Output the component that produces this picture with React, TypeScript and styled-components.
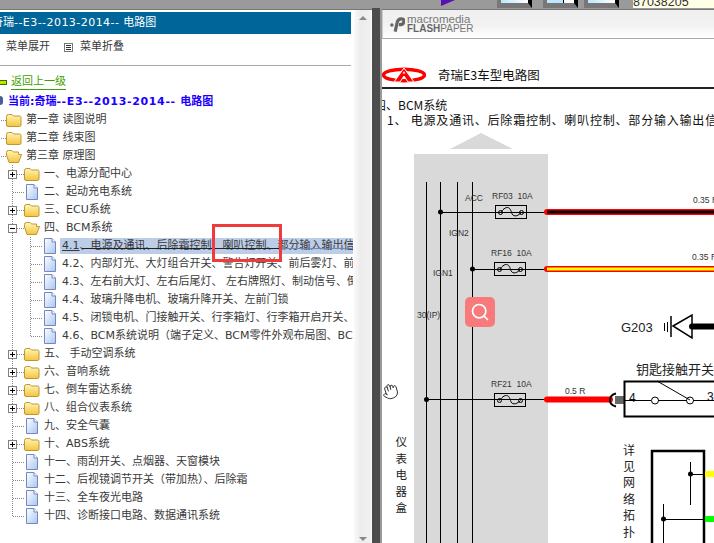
import React from "react";
import styled, { createGlobalStyle } from "styled-components";
import { Hand, Search } from "lucide-react";

const GlobalStyle = createGlobalStyle`
  html, body {
    margin: 0;
    background: #fff;
  }
`;

type Kind = "closed" | "open" | "doc";

interface TreeItem {
  text: string;
  level: number;
  kind: Kind;
  expander?: "plus" | "minus";
  last?: boolean;
  selected?: boolean;
}

const treeItems: TreeItem[] = [
  { text: "第一章 读图说明", level: 1, kind: "closed" },
  { text: "第二章 线束图", level: 1, kind: "closed" },
  { text: "第三章 原理图", level: 1, kind: "open" },
  { text: "一、电源分配中心", level: 2, kind: "closed", expander: "plus" },
  { text: "二、起动充电系统", level: 2, kind: "doc" },
  { text: "三、ECU系统", level: 2, kind: "closed", expander: "plus" },
  { text: "四、BCM系统", level: 2, kind: "open", expander: "minus" },
  { text: "4.1、电源及通讯、后除霜控制、喇叭控制、部分输入输出信号", level: 3, kind: "doc", selected: true },
  { text: "4.2、内部灯光、大灯组合开关、警告灯开关、前后雾灯、前舱盖", level: 3, kind: "doc" },
  { text: "4.3、左右前大灯、左右后尾灯、 左右牌照灯、制动信号、倒车灯", level: 3, kind: "doc" },
  { text: "4.4、玻璃升降电机、玻璃升降开关、左前门锁", level: 3, kind: "doc" },
  { text: "4.5、闭锁电机、门接触开关、行李箱灯、行李箱开启开关、顶灯", level: 3, kind: "doc" },
  { text: "4.6、BCM系统说明（端子定义、BCM零件外观布局图、BCM", level: 3, kind: "doc", last: true },
  { text: "五、 手动空调系统", level: 2, kind: "closed", expander: "plus" },
  { text: "六、音响系统", level: 2, kind: "closed", expander: "plus" },
  { text: "七、倒车雷达系统", level: 2, kind: "closed", expander: "plus" },
  { text: "八、组合仪表系统", level: 2, kind: "closed", expander: "plus" },
  { text: "九、安全气囊", level: 2, kind: "doc" },
  { text: "十、ABS系统", level: 2, kind: "closed", expander: "plus" },
  { text: "十一、雨刮开关、点烟器、天窗模块", level: 2, kind: "doc" },
  { text: "十二、后视镜调节开关（带加热）、后除霜", level: 2, kind: "doc" },
  { text: "十三、全车夜光电路", level: 2, kind: "doc" },
  { text: "十四、诊断接口电路、数据通讯系统", level: 2, kind: "doc", last: true },
];

const TreeIcon = ({ kind }: { kind: Kind }) => {
  if (kind === "doc") {
    return (
      <IconSvg viewBox="0 0 16 16">
        <defs>
          <linearGradient id="docFill" x1="0" y1="0" x2="1" y2="1">
            <stop offset="0" stopColor="#fff" />
            <stop offset="1" stopColor="#a9c6f2" />
          </linearGradient>
        </defs>
        <path d="M2.5 .5H10L13.5 4V15.5H2.5Z" fill="url(#docFill)" stroke="#7487c0" />
        <path d="M10 .5V4H13.5" fill="#fff" stroke="#7487c0" />
      </IconSvg>
    );
  }
  return (
    <IconSvg viewBox="0 0 16 16">
      <defs>
        <linearGradient id="folderFill" x1="0" y1="0" x2="0" y2="1">
          <stop offset="0" stopColor="#fff6b8" />
          <stop offset="1" stopColor="#f5c43c" />
        </linearGradient>
      </defs>
      {kind === "closed" ? (
        <path d="M.5 4.5Q.5 2.5 2.5 2.5H6L7.5 4H13.5Q15 4 15 5.5V13Q15 14.5 13.5 14.5H2Q.5 14.5 .5 13Z" fill="url(#folderFill)" stroke="#bd9636" />
      ) : (
        <path d="M.5 4.5Q.5 2.5 2.5 2.5H6L7.5 4H12.5V6.5H15.5L12.5 14.5H3L.5 7Z" fill="url(#folderFill)" stroke="#bd9636" />
      )}
    </IconSvg>
  );
};

const Row = ({ item }: { item: TreeItem }) => {
  const indents = [];
  for (let i = 1; i < item.level; i++) {
    indents.push(<Guide key={i} />);
  }
  return (
    <TreeRow>
      {indents}
      <Joint $last={item.last}>
        {item.expander && <Expander $open={item.expander === "minus"} />}
      </Joint>
      <TreeIcon kind={item.kind} />
      <Label $selected={item.selected}>
        {item.selected ? (
          <>
            <u>4.1</u>
            {item.text.slice(3)}
          </>
        ) : (
          item.text
        )}
      </Label>
    </TreeRow>
  );
};

const Fuse = ({ x, y }: { x: number; y: number }) => (
  <g>
    <rect x={x} y={y} width="31" height="13" fill="none" stroke="#000" />
    <circle cx={x + 5} cy={y + 7} r="2" fill="none" stroke="#000" />
    <circle cx={x + 26} cy={y + 7} r="2" fill="none" stroke="#000" />
    <path d={`M${x + 5} ${y + 7}C${x + 12} ${y - 2} ${x + 15} ${y + 3} ${x + 16} ${y + 7}S${x + 21} ${y + 12} ${x + 26} ${y + 7}`} fill="none" stroke="#000" />
  </g>
);

const Diagram = () => (
  <DiagramSvg viewBox="382 133 332 410">
    <polygon points="481,133 450,149 513,149" fill="#d9d9d9" />
    <rect x="414" y="154" width="134" height="389" fill="#d9d9d9" />

    {[426.5, 440.5, 457.5, 472.5].map((x) => (
      <line key={x} x1={x} y1="182" x2={x} y2="543" stroke="#000" />
    ))}

    <SmallText x="465" y="201">ACC</SmallText>
    <SmallText x="449" y="236">IGN2</SmallText>
    <SmallText x="433" y="276">IGN1</SmallText>
    <SmallText x="417" y="318">30(IP)</SmallText>

    <SmallText x="492" y="199">RF03&#160;&#160;10A</SmallText>
    <circle cx="440.5" cy="212" r="2.5" />
    <line x1="440" y1="212.5" x2="547" y2="212.5" stroke="#000" />
    <Fuse x={495.5} y={205.5} />
    <line x1="547" y1="212" x2="714" y2="212" stroke="#f00" strokeWidth="6" strokeLinecap="round" />
    <line x1="547" y1="212" x2="714" y2="212" stroke="#000" strokeWidth="3" />
    <SmallText x="693" y="203">0.35 R</SmallText>

    <SmallText x="491" y="256">RF16&#160;&#160;10A</SmallText>
    <circle cx="472.5" cy="269" r="2.5" />
    <line x1="472" y1="269.5" x2="547" y2="269.5" stroke="#000" />
    <Fuse x={494.5} y={262.5} />
    <line x1="547" y1="269" x2="714" y2="269" stroke="#f00" strokeWidth="6" strokeLinecap="round" />
    <line x1="547" y1="269" x2="714" y2="269" stroke="#ff0" strokeWidth="3" />
    <SmallText x="692" y="260">0.35 R</SmallText>

    <SmallText x="491" y="387">RF21&#160;&#160;10A</SmallText>
    <circle cx="426.5" cy="399.5" r="2.5" />
    <line x1="426" y1="399.5" x2="546" y2="399.5" stroke="#000" />
    <Fuse x={494.5} y={393.5} />
    <line x1="547" y1="399.5" x2="610" y2="399.5" stroke="#f00" strokeWidth="6" strokeLinecap="round" />
    <SmallText x="565" y="394">0.5 R</SmallText>
    <path d="M616 393.5Q610 395 610 400T616 406.5" fill="none" stroke="#000" strokeWidth="2" />
    <rect x="615" y="396" width="9" height="8" fill="#666" />

    <BigText x="621" y="332">G203</BigText>
    <line x1="664.5" y1="323" x2="664.5" y2="331" stroke="#000" />
    <line x1="667.5" y1="322" x2="667.5" y2="332" stroke="#000" />
    <line x1="671" y1="316" x2="671" y2="337" stroke="#000" strokeWidth="1.5" />
    <polygon points="673,326 692,315 692,338" fill="#fff" stroke="#000" strokeWidth="1.5" />
    <line x1="692" y1="326.5" x2="714" y2="326.5" stroke="#000" strokeWidth="6" strokeLinecap="round" />

    <CjkText x="636" y="374" $size={13}>钥匙接触开关</CjkText>
    <path d="M714 381.5H624.5V416.5H714" fill="none" stroke="#000" strokeWidth="2" />
    <MidText x="629" y="402">4</MidText>
    <MidText x="707" y="401">3</MidText>
    <line x1="624" y1="400.5" x2="651" y2="400.5" stroke="#000" />
    <circle cx="655" cy="400.5" r="3.5" fill="none" stroke="#000" />
    <line x1="658" y1="400.5" x2="687" y2="400.5" stroke="#000" />
    <circle cx="690" cy="400.5" r="3.5" fill="none" stroke="#000" />
    <line x1="657" y1="381" x2="690" y2="400" stroke="#000" />
    <line x1="693" y1="400.5" x2="714" y2="400.5" stroke="#000" />

    {["仪", "表", "电", "器", "盒"].map((c, i) => (
      <CjkText key={c} x="395.5" y={446 + i * 16.5} $size={11.5}>{c}</CjkText>
    ))}
    {["详", "见", "网", "络", "拓", "扑", "图"].map((c, i) => (
      <CjkText key={c} x="623" y={454.5 + i * 16.4} $size={12}>{c}</CjkText>
    ))}

    <path d="M652 543V451H704V543" fill="none" stroke="#000" strokeWidth="2.5" />
    <line x1="690.5" y1="462" x2="690.5" y2="505" stroke="#000" />
    <circle cx="690.5" cy="474" r="2.5" />
    <line x1="690" y1="474.5" x2="704" y2="474.5" stroke="#000" />
    <line x1="705" y1="474" x2="714" y2="474" stroke="#ff0" strokeWidth="6" />
    <line x1="663.5" y1="504" x2="663.5" y2="543" stroke="#000" />
    <circle cx="663.5" cy="519" r="2.5" />
    <line x1="663" y1="519.5" x2="704" y2="519.5" stroke="#000" />
    <line x1="705" y1="519" x2="714" y2="519" stroke="#0f0" strokeWidth="6" />
  </DiagramSvg>
);

const CheryLogo = () => (
  <LogoSvg viewBox="0 0 44 16">
    <ellipse cx="22" cy="8" rx="20.5" ry="5.8" fill="none" stroke="#f00" strokeWidth="3.4" />
    <path d="M22 1L12 15H18L22 9L26 15H32Z" fill="#f00" stroke="#fff" strokeWidth="1" />
    <path d="M20.5 6.5H23.5L22 4.2Z" fill="#fff" />
  </LogoSvg>
);

const FlashMark = () => (
  <MarkSvg viewBox="0 0 16 16">
    <circle cx="2" cy="8.5" r="1.8" fill="#666" />
    <path d="M5.5 15.5L7.5 6.5Q8.2 2 12 2Q15.5 2 14.8 5Q14.2 8.5 9.5 8.2" fill="none" stroke="#666" strokeWidth="3.4" />
  </MarkSvg>
);

const App = () => (
  <Page>
    <GlobalStyle />
    <TopStrip>
      <PurpleFlag />
      <ToolButton />
      <ToolButton $split />
      <ToolButton />
      <Counter>87038205</Counter>
    </TopStrip>
    <Body>
      <TreePanel>
        <PanelHeader>
          奇瑞<WideLatin>--E3--2013-2014-- </WideLatin>电路图
        </PanelHeader>
        <MenuBar>
          <MenuItem>菜单展开</MenuItem>
          <MenuIcon />
          <MenuItem>菜单折叠</MenuItem>
        </MenuBar>
        <TreeBody>
          <BackRow>
            <BackIcon />
            <BackLink>返回上一级</BackLink>
          </BackRow>
          <CurrentRow>
            <PersonIcon />
            <CurrentText>
              当前:奇瑞<WideBoldLatin>--E3--2013-2014-- </WideBoldLatin>电路图
            </CurrentText>
          </CurrentRow>
          <TreeList>
            {treeItems.map((item) => (
              <Row key={item.text} item={item} />
            ))}
          </TreeList>
        </TreeBody>
      </TreePanel>
      <ScrollRail>
        <ArrowUp />
        <ArrowDown />
      </ScrollRail>
      <Splitter />
      <Viewer>
        <FlashBar>
          <FlashMark />
          <FlashWords>
            <MacroName>macromedia</MacroName>
            <FlashName>
              <b>FLASH</b>PAPER
            </FlashName>
          </FlashWords>
        </FlashBar>
        <TitleRow>
          <CheryLogo />
          <DocTitle>奇瑞E3车型电路图</DocTitle>
        </TitleRow>
        <SectionTitle>四、BCM系统</SectionTitle>
        <SubTitle>1、 电源及通讯、后除霜控制、喇叭控制、部分输入输出信号</SubTitle>
        <Diagram />
        <HandCursor>
          <Hand size={17} strokeWidth={1.2} color="#222" fill="#fff" />
        </HandCursor>
        <ZoomButton>
          <Search size={20} strokeWidth={2} color="#fff" />
        </ZoomButton>
      </Viewer>
    </Body>
    <Highlight />
  </Page>
);

const Page = styled.div`
  position: relative;
  display: flex;
  flex-direction: column;
  width: 714px;
  height: 543px;
  overflow: hidden;
  font-family: "DejaVu Sans", "Noto Sans CJK SC", sans-serif;
  font-size: 11px;
  color: #3a3a3a;
`;

const TopStrip = styled.div`
  display: flex;
  flex: none;
  align-items: flex-start;
  box-sizing: border-box;
  height: 10px;
  padding-left: 441px;
  background: #9a9a9a;
  border-bottom: 1px solid #777;
  overflow: hidden;
`;

const PurpleFlag = styled.div`
  width: 0;
  height: 0;
  margin-right: 42px;
  border-top: 6px solid #5a10b0;
  border-right: 14px solid transparent;
`;

const ToolButton = styled.div<{ $split?: boolean }>`
  box-sizing: border-box;
  width: 35px;
  height: 8px;
  margin-right: ${(p) => (p.$split ? "6px" : "11px")};
  border-left: 4px solid #777;
  border-right: 4px solid #000;
  border-bottom: 5px solid #777;
  background: ${(p) =>
    p.$split
      ? "linear-gradient(90deg, #bfe6fa 60%, #000 60%, #000 64%, #fff 64%)"
      : "linear-gradient(90deg, #bfe6fa, #fff)"};
`;

const Counter = styled.div`
  flex: 1;
  height: 8px;
  margin-left: 3px;
  background: #ffffe6;
  color: #333;
  font-family: "Liberation Sans", sans-serif;
  font-size: 12.5px;
  line-height: 5px;
`;

const Body = styled.div`
  display: flex;
  flex: 1;
  min-height: 0;
`;

const TreePanel = styled.div`
  flex: none;
  width: 353px;
  margin-right: 1px;
  padding-top: 2px;
  overflow: hidden;
`;

const PanelHeader = styled.div`
  width: 351px;
  height: 22px;
  text-indent: -8px;
  background: #00669a;
  color: #fff;
  font-size: 11px;
  line-height: 21px;
  white-space: nowrap;
  overflow: hidden;
`;

const WideLatin = styled.span`
  letter-spacing: 0.45px;
`;

const WideBoldLatin = styled.span`
  letter-spacing: 0.65px;
`;

const MenuBar = styled.div`
  display: flex;
  align-items: flex-start;
  box-sizing: border-box;
  width: 351px;
  height: 32px;
  padding: 5px 0 0 6px;
  border-bottom: 1px solid #aaa;
`;

const MenuItem = styled.span`
  line-height: 16px;
`;

const MenuIcon = styled.span`
  box-sizing: border-box;
  width: 9px;
  height: 9px;
  margin: 4px 7px 0 14px;
  border: 1px solid #777;
  background: linear-gradient(#333, #333) 1px 1px / 5px 1px no-repeat,
    linear-gradient(#333, #333) 1px 3px / 5px 1px no-repeat,
    linear-gradient(#333, #333) 1px 5px / 5px 1px no-repeat;
`;

const TreeBody = styled.div`
  padding-top: 7px;
`;

const BackRow = styled.div`
  display: flex;
  align-items: center;
  gap: 4px;
  height: 18px;
  margin-left: -6px;
`;

const BackIcon = styled.span`
  box-sizing: border-box;
  width: 13px;
  height: 5px;
  border: 1px solid #2a7a00;
  background: #c8e000;
`;

const BackLink = styled.span`
  color: #3f9f00;
  border-bottom: 1px solid #3f9f00;
  line-height: 14px;
`;

const CurrentRow = styled.div`
  display: flex;
  align-items: center;
  gap: 5px;
  height: 18px;
  margin-left: -7px;
`;

const PersonIcon = styled.span`
  width: 10px;
  height: 9px;
  border-radius: 3px;
  background: #47609c;
`;

const CurrentText = styled.span`
  color: #1c00ff;
  font-weight: bold;
  white-space: nowrap;
`;

const TreeList = styled.div`
  margin: 2px 0 0 -14px;
`;

const TreeRow = styled.div`
  display: flex;
  align-items: center;
  height: 18px;
  white-space: nowrap;
`;

const Guide = styled.span`
  flex: none;
  align-self: stretch;
  width: 18px;
  background: repeating-linear-gradient(#888 0 1px, transparent 1px 2px) 8px 0 / 1px 100% no-repeat;
`;

const Joint = styled.span<{ $last?: boolean }>`
  display: flex;
  flex: none;
  align-self: stretch;
  align-items: center;
  width: 20px;
  background:
    repeating-linear-gradient(90deg, #888 0 1px, transparent 1px 2px) 9px 9px / 11px 1px no-repeat,
    repeating-linear-gradient(#888 0 1px, transparent 1px 2px) 8px 0 / 1px ${(p) => (p.$last ? "10px" : "100%")} no-repeat;
`;

const Expander = styled.span<{ $open?: boolean }>`
  box-sizing: border-box;
  width: 9px;
  height: 9px;
  margin-left: 4px;
  border: 1px solid #808080;
  background: linear-gradient(#000, #000) center / 5px 1px no-repeat,
    ${(p) => (p.$open ? "" : "linear-gradient(#000, #000) center / 1px 5px no-repeat,")} #fff;
`;

const IconSvg = styled.svg`
  flex: none;
  width: 16px;
  height: 16px;
`;

const Label = styled.span<{ $selected?: boolean }>`
  position: relative;
  flex: 1;
  margin-left: ${(p) => (p.$selected ? "2px" : "4px")};
  padding-left: ${(p) => (p.$selected ? "2px" : "0")};
  line-height: 16px;
  background: ${(p) => (p.$selected ? "#bccde8" : "transparent")};

  ${(p) =>
    p.$selected &&
    `&::after {
      content: "";
      position: absolute;
      left: 22px;
      right: 0;
      top: 10px;
      height: 1px;
      background: linear-gradient(90deg, #222 70%, #6f86b8 70%);
    }`}
`;

const ScrollRail = styled.div`
  display: flex;
  flex: none;
  flex-direction: column;
  align-items: center;
  justify-content: space-between;
  box-sizing: border-box;
  width: 18px;
  padding: 6px 0 2px;
  background: linear-gradient(90deg, #fafafa, #ececec 35%, #f0f0f0 90%, #fff);
`;

const ArrowUp = styled.span`
  width: 0;
  height: 0;
  border-left: 4px solid transparent;
  border-right: 4px solid transparent;
  border-bottom: 4px solid #888;
`;

const ArrowDown = styled.span`
  width: 0;
  height: 0;
  border-left: 4px solid transparent;
  border-right: 4px solid transparent;
  border-top: 4px solid #888;
`;

const Splitter = styled.div`
  flex: none;
  box-sizing: border-box;
  width: 10px;
  margin-top: -2px;
  background: #4d4d4d;
  border-right: 2px solid #999;
`;

const Viewer = styled.div`
  position: relative;
  flex: 1;
  min-width: 0;
  overflow: hidden;
  background: #fff;
  font-family: "Noto Sans CJK SC", sans-serif;
  color: #111;
`;

const FlashBar = styled.div`
  display: flex;
  align-items: center;
  gap: 2px;
  box-sizing: border-box;
  height: 29px;
  padding-left: 7px;
  background: linear-gradient(#efefef, #f2f2f2 55%, #fff);
  border-bottom: 1px solid #aaa;
  border-left: 1px solid #ccc;
`;

const MarkSvg = styled.svg`
  width: 15px;
  height: 15px;
`;

const FlashWords = styled.div`
  display: flex;
  flex-direction: column;
  font-family: "Liberation Sans", sans-serif;
  color: #777;
`;

const MacroName = styled.span`
  font-size: 11.5px;
  line-height: 9px;
`;

const FlashName = styled.span`
  font-size: 10px;
  line-height: 10px;

  b {
    color: #666;
  }
`;

const TitleRow = styled.div`
  display: flex;
  align-items: flex-start;
  gap: 12px;
  box-sizing: border-box;
  height: 50px;
  padding-top: 28px;
  border-bottom: 2px solid #222;
`;

const LogoSvg = styled.svg`
  flex: none;
  width: 44px;
  height: 16px;
`;

const DocTitle = styled.span`
  font-size: 12.5px;
  line-height: 16px;
`;

const SectionTitle = styled.div`
  margin: 8px 0 0 -8px;
  font-size: 12px;
  line-height: 15px;
  white-space: nowrap;
`;

const SubTitle = styled.div`
  margin: 0 0 6px 5px;
  font-size: 12px;
  letter-spacing: 0.8px;
  line-height: 15px;
  white-space: nowrap;
`;

const DiagramSvg = styled.svg`
  display: block;
  width: 332px;
  height: 410px;
`;

const SmallText = styled.text`
  font-family: "Liberation Sans", sans-serif;
  font-size: 8.5px;
  fill: #333;
`;

const MidText = styled.text`
  font-family: "Liberation Sans", sans-serif;
  font-size: 12px;
  fill: #111;
`;

const BigText = styled.text`
  font-family: "Liberation Sans", sans-serif;
  font-size: 13px;
  fill: #222;
`;

const CjkText = styled.text<{ $size: number }>`
  font-family: "Noto Sans CJK SC", sans-serif;
  font-size: ${(p) => p.$size}px;
  fill: #222;
`;

const HandCursor = styled.div`
  position: absolute;
  left: 0;
  top: 373px;
  transform: rotate(-18deg);
`;

const ZoomButton = styled.div`
  position: absolute;
  left: 83px;
  top: 287px;
  display: flex;
  align-items: center;
  justify-content: center;
  width: 30px;
  height: 30px;
  border-radius: 5px;
  background: #f87a7a;
`;

const Highlight = styled.div`
  position: absolute;
  left: 212px;
  top: 224px;
  box-sizing: border-box;
  width: 70px;
  height: 38px;
  border: 3px solid #ee3b3b;
`;

export default App;
